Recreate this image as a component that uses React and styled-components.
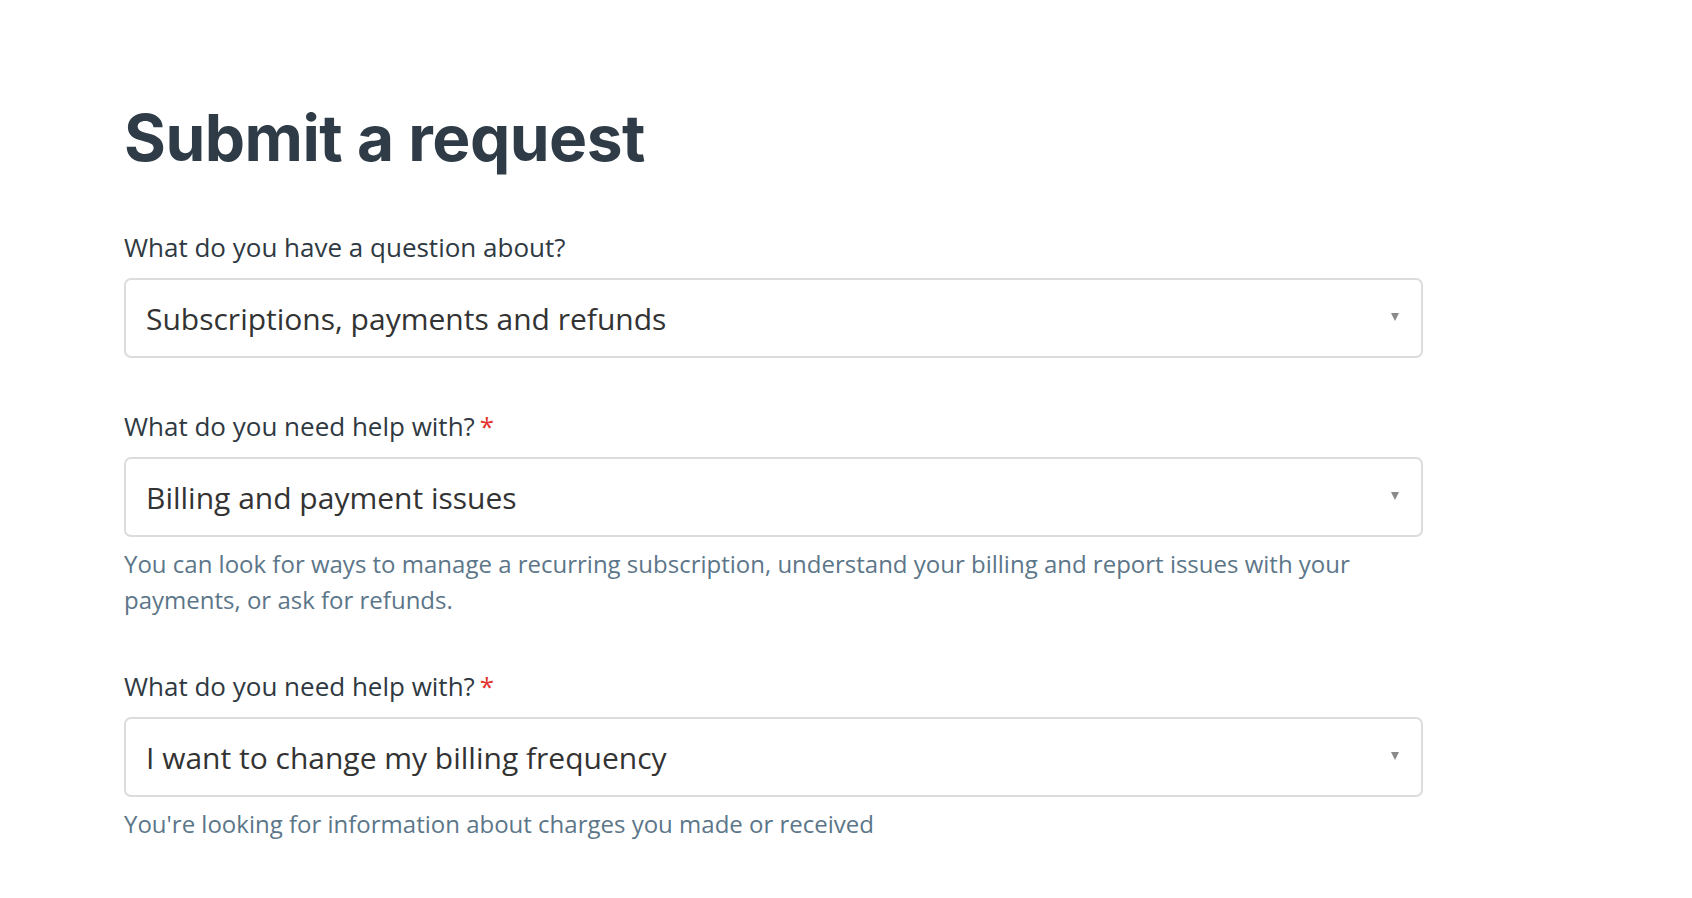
import React from 'react';
import styled, { createGlobalStyle } from 'styled-components';

const GlobalStyle = createGlobalStyle`
  html, body {
    margin: 0;
    padding: 0;
    background: #ffffff;
  }
  body {
    font-family: "Open Sans", Lato, sans-serif;
    -webkit-font-smoothing: antialiased;
  }
`;

const fields = [
  {
    label: 'What do you have a question about?',
    value: 'Subscriptions, payments and refunds',
    required: false,
  },
  {
    label: 'What do you need help with?',
    value: 'Billing and payment issues',
    required: true,
    hint: 'You can look for ways to manage a recurring subscription, understand your billing and report issues with your payments, or ask for refunds.',
  },
  {
    label: 'What do you need help with?',
    value: 'I want to change my billing frequency',
    required: true,
    hint: "You're looking for information about charges you made or received",
  },
];

const App = () => {
  return (
    <>
      <GlobalStyle />
      <Page>
        <Title>Submit a request</Title>
        <Form>
          {fields.map((f, i) => (
            <Field key={i}>
              <Label>
                {f.label}
                {f.required && <Required>*</Required>}
              </Label>
              <Select>
                <SelectValue>{f.value}</SelectValue>
                <Caret />
              </Select>
              {f.hint && <Hint>{f.hint}</Hint>}
            </Field>
          ))}
        </Form>
      </Page>
    </>
  );
};

const Page = styled.main`
  width: 1299px;
  padding: 106px 0 0 124px;
`;

const Title = styled.h1`
  margin: 0;
  font-family: Inter, "Liberation Sans", sans-serif;
  font-weight: 700;
  font-size: 64px;
  line-height: 1;
  letter-spacing: -0.5px;
  color: #2f3c47;
`;

const Form = styled.div`
  display: flex;
  flex-direction: column;
  gap: 52px;
  margin-top: 61px;
`;

const Field = styled.div`
  display: flex;
  flex-direction: column;
`;

const Label = styled.label`
  font-size: 26px;
  line-height: 32px;
  color: #2f3942;
  margin-bottom: 15px;
`;

const Required = styled.span`
  color: #e3342f;
  margin-left: 5px;
`;

const Select = styled.div`
  box-sizing: border-box;
  height: 80px;
  border: 2px solid #dcdcdc;
  border-radius: 7px;
  padding: 0 22px 0 20px;
  display: flex;
  align-items: center;
  justify-content: space-between;
`;

const SelectValue = styled.span`
  font-size: 30px;
  color: #333333;
`;

const Caret = styled.span`
  width: 0;
  height: 0;
  border-left: 4px solid transparent;
  border-right: 4px solid transparent;
  border-top: 8px solid #8a8a8a;
  margin-top: -3px;
`;

const Hint = styled.p`
  max-width: 1250px;
  margin: 9px 0 0;
  font-size: 24px;
  line-height: 36px;
  color: #5c7689;
`;

export default App;
